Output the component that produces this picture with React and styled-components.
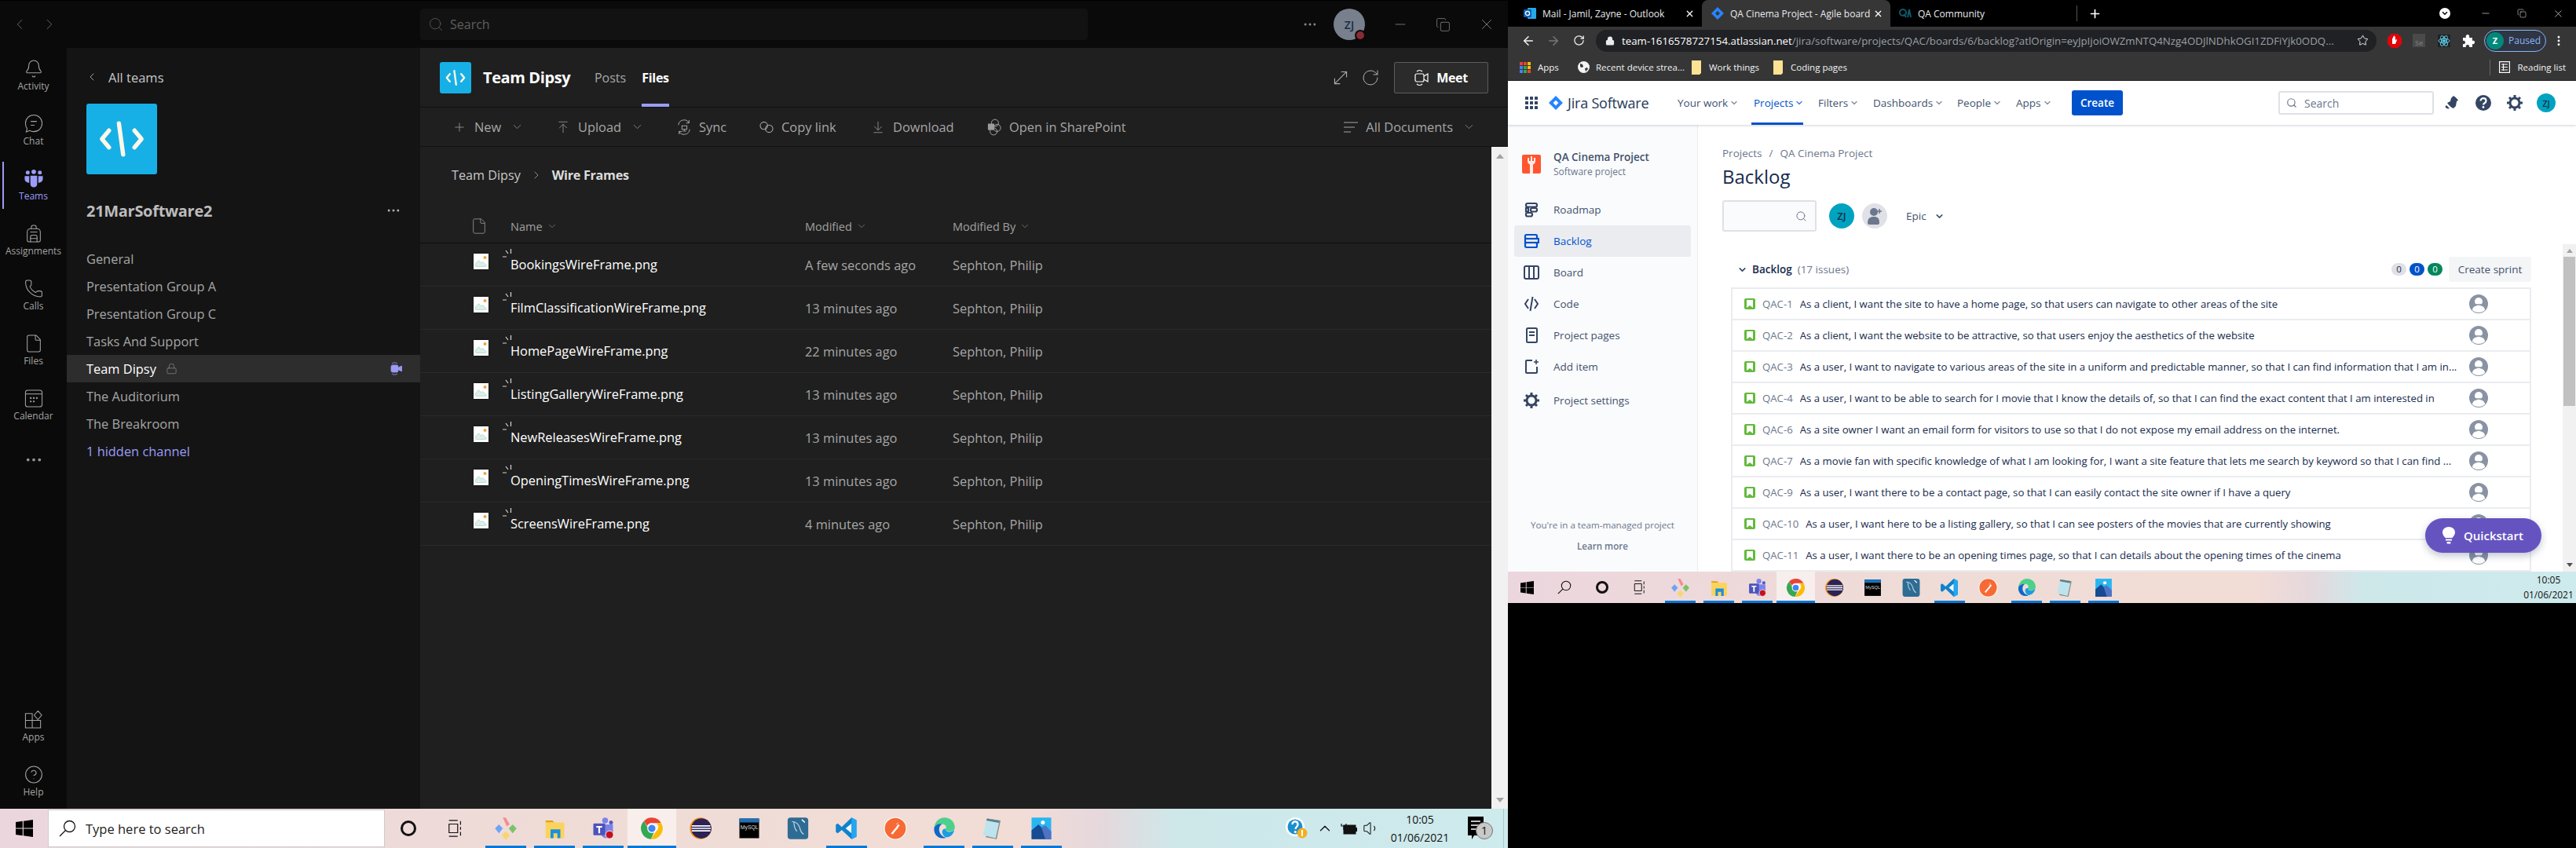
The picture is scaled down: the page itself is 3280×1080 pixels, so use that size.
import React from "react";
import styled, { createGlobalStyle } from "styled-components";
import {
  ArrowDownToLine, ArrowLeft, ArrowRight, ArrowUpToLine, Backpack, Bell, ChevronDown, ChevronLeft, ChevronRight, ChevronUp,
  CircleHelp, Copy, Ellipsis, EllipsisVertical, File, Lock, Minus, MoveDiagonal, Phone, Plus, RotateCw, Search,
  Star, Volume1, X,
} from "lucide-react";

const Global = createGlobalStyle`
  html, body { margin: 0; padding: 0; background: #000; }
  body { font-family: "Open Sans", "Liberation Sans", sans-serif; overflow: hidden; }
  * { box-sizing: border-box; }
`;

const Page = styled.div`
  display: flex;
  width: 3280px;
  height: 1080px;
  background: #000;
  overflow: hidden;
`;

const LeftScreen = styled.div`
  display: flex;
  flex-direction: column;
  width: 1920px;
  height: 1080px;
  flex: none;
`;

const RightScreen = styled.div`
  display: flex;
  flex-direction: column;
  width: 1360px;
  height: 768px;
  flex: none;
`;

/* ---------- Teams window ---------- */

const TeamsWindow = styled.div`
  display: flex;
  flex-direction: column;
  height: 1030px;
  background: #1f1f1f;
`;

const TitleBar = styled.div`
  display: flex;
  align-items: center;
  height: 61px;
  flex: none;
  background: #0a0a0a;
  border-top: 1px solid #000;
  color: #6f6f6f;
`;

const HistoryNav = styled.div`
  display: flex;
  gap: 16px;
  width: 535px;
  padding-left: 14px;
`;

const TitleSearch = styled.div`
  display: flex;
  align-items: center;
  gap: 8px;
  width: 850px;
  height: 40px;
  padding-left: 10px;
  background: #121212;
  border-radius: 4px;
  font-size: 16px;
  color: #5e5e5e;
`;

const TitleDots = styled.div`
  display: flex;
  margin-left: 273px;
  color: #8a8a8a;
`;

const Avatar = styled.div`
  position: relative;
  display: flex;
  align-items: center;
  justify-content: center;
  width: 40px;
  height: 40px;
  margin: 0 17px 0 20px;
  border-radius: 50%;
  background: #77808c;
  color: #1d2a4a;
  font-size: 14px;
  font-weight: 600;
`;

const PresenceDot = styled.span`
  position: absolute;
  right: -1px;
  bottom: -1px;
  width: 14px;
  height: 14px;
  border-radius: 50%;
  border: 2px solid #0a0a0a;
  background: #8a2b33;
`;

const WinBtn = styled.div`
  display: flex;
  align-items: center;
  justify-content: center;
  width: 55px;
  color: #858585;
`;

const TeamsBody = styled.div`
  display: flex;
  flex: 1;
  min-height: 0;
`;

const Rail = styled.nav`
  display: flex;
  flex-direction: column;
  width: 85px;
  flex: none;
  background: #0a0a0a;
`;

const RailItem = styled.div`
  position: relative;
  display: flex;
  flex-direction: column;
  align-items: center;
  gap: 1px;
  height: 70px;
  padding-top: 14px;
  font-size: 12px;
  line-height: 18px;
  color: ${(p) => (p.$active ? "#9a9cf5" : "#a3a3a3")};
  margin-top: ${(p) => (p.$push ? "auto" : "0")};
  svg { height: 25px; width: 26px; }
  ${(p) =>
    p.$active &&
    `&::before { content: ""; position: absolute; left: 3px; top: 5px; width: 2px; height: 60px; background: #9a9cf5; }`}
`;

const RailMore = styled(RailItem)`
  padding-top: 22px;
  color: #9a9a9a;
`;

const ChannelPanel = styled.aside`
  display: flex;
  flex-direction: column;
  width: 450px;
  flex: none;
  background: #141414;
`;

const BackRow = styled.div`
  display: flex;
  align-items: center;
  gap: 13px;
  height: 26px;
  margin-top: 24px;
  padding-left: 24px;
  font-size: 16.5px;
  color: #c8c8c8;
`;

const TeamLogoBox = styled.div`
  display: flex;
  align-items: center;
  justify-content: center;
  width: ${(p) => p.$size}px;
  height: ${(p) => p.$size}px;
  flex: none;
  border-radius: 3px;
  background: #17b0e6;
`;

const LogoSlot = styled.div`
  margin: 21px 0 0 25px;
`;

const TeamName = styled.div`
  display: flex;
  align-items: center;
  justify-content: space-between;
  height: 30px;
  margin-top: 31px;
  padding: 0 24px 0 25px;
  font-size: 20px;
  font-weight: 700;
  letter-spacing: -0.3px;
  color: #bcbcbc;
  svg { color: #b0b0b0; }
`;

const ChannelList = styled.ul`
  list-style: none;
  margin: 29px 0 0;
  padding: 0;
`;

const Channel = styled.li`
  display: flex;
  align-items: center;
  gap: 12px;
  height: 35px;
  padding: 0 23px 0 25px;
  font-size: 16.4px;
  color: ${(p) => (p.$active ? "#fff" : p.$link ? "#9a9cf5" : "#a6a6a6")};
  background: ${(p) => (p.$active ? "#2d2d2d" : "transparent")};
`;

const ChannelSpacer = styled.span`
  flex: 1;
`;

const Content = styled.main`
  display: flex;
  flex-direction: column;
  flex: 1;
  min-width: 0;
`;

const ChannelHeader = styled.header`
  display: flex;
  align-items: stretch;
  height: 76px;
  flex: none;
  padding: 0 25px;
  border-bottom: 1px solid #111;
`;

const HeaderLogo = styled.div`
  display: flex;
  align-items: center;
`;

const HeaderTitle = styled.div`
  display: flex;
  align-items: center;
  width: 142px;
  margin-left: 15px;
  font-size: 20px;
  font-weight: 700;
  letter-spacing: -0.4px;
  color: #fff;
`;

const Tab = styled.div`
  display: flex;
  align-items: center;
  justify-content: center;
  padding-top: 4px;
  width: ${(p) => p.$w}px;
  margin-right: ${(p) => p.$gap || 0}px;
  font-size: 16px;
  font-weight: ${(p) => (p.$active ? 700 : 400)};
  letter-spacing: ${(p) => (p.$active ? "-0.3px" : "0")};
  color: ${(p) => (p.$active ? "#fff" : "#a6a6a6")};
  border-bottom: 4px solid ${(p) => (p.$active ? "#9a9cf5" : "transparent")};
`;

const HeaderRight = styled.div`
  display: flex;
  align-items: center;
  margin-left: auto;
  color: #b0b0b0;
`;

const HeaderIcon = styled.div`
  display: flex;
  justify-content: center;
  width: 38px;
`;

const MeetButton = styled.div`
  display: flex;
  align-items: center;
  justify-content: center;
  gap: 10px;
  width: 120px;
  height: 40px;
  margin-left: 11px;
  border: 1px solid #5c5c5c;
  border-radius: 2px;
  background: #2b2b2b;
  color: #fff;
  font-size: 16px;
  font-weight: 700;
  letter-spacing: -0.3px;
`;

const Toolbar = styled.div`
  display: flex;
  align-items: center;
  height: 50px;
  flex: none;
  padding: 0 41px;
  border-bottom: 1px solid #111;
  color: #a6a6a6;
  font-size: 16.4px;
`;

const Tool = styled.div`
  display: flex;
  align-items: center;
  gap: 10px;
  width: ${(p) => (p.$w ? `${p.$w}px` : "auto")};
  margin-left: ${(p) => (p.$right ? "auto" : "0")};
`;

const ToolIcon = styled.span`
  display: flex;
  justify-content: center;
  width: 18px;
  flex: none;
`;

const ToolChevron = styled.span`
  display: flex;
  margin-left: 2px;
`;

const FilesArea = styled.div`
  display: flex;
  flex: 1;
  min-height: 0;
`;

const FilesMain = styled.div`
  flex: 1;
  min-width: 0;
`;

const Crumbs = styled.div`
  display: flex;
  align-items: center;
  gap: 12px;
  height: 28px;
  margin-top: 22px;
  padding-left: 40px;
  font-size: 16.2px;
  color: #c8c8c8;
`;

const CrumbCurrent = styled.strong`
  font-weight: 700;
  letter-spacing: -0.3px;
  color: #dcdcdc;
`;

const TableGrid = styled.div`
  display: grid;
  grid-template-columns: 115px 375px 188px 1fr;
  align-items: center;
`;

const TableHead = styled(TableGrid)`
  height: 43px;
  margin-top: 30px;
  border-bottom: 1px solid #0e0e0e;
  font-size: 14.5px;
  color: #a0a0a0;
`;

const HeadCell = styled.div`
  display: flex;
  align-items: center;
  gap: 5px;
`;

const FileHeadIcon = styled.div`
  display: flex;
  padding-left: 64px;
  color: #8c8c8c;
`;

const FileRow = styled(TableGrid)`
  height: 55px;
  border-bottom: 1px solid #2a2a2a;
  font-size: 16.4px;
  color: #a6a6a6;
`;

const ThumbCell = styled.div`
  display: flex;
  padding: 0 0 8px 68px;
`;

const Thumb = styled.div`
  display: flex;
  width: 19px;
  height: 20px;
  background: #fff;
  box-shadow: 0 0 2px rgba(0, 0, 0, 0.7);
`;

const FileName = styled.div`
  position: relative;
  line-height: 22px;
  color: #fff;
`;

const SyncMarks = styled.svg`
  position: absolute;
  left: -10px;
  top: -9px;
`;

const ScrollTrack = styled.div`
  display: flex;
  flex-direction: column;
  justify-content: space-between;
  align-items: center;
  width: 21px;
  flex: none;
  padding: 9px 0 8px;
  background: #f1f1f1;
`;

const Triangle = styled.span`
  width: 0;
  height: 0;
  border-left: 5px solid transparent;
  border-right: 5px solid transparent;
  ${(p) => (p.$down ? "border-top: 6px solid #a3a3a3;" : "border-bottom: 6px solid #a3a3a3;")}
`;

/* ---------- Windows taskbar ---------- */

const Taskbar = styled.footer`
  display: flex;
  align-items: center;
  height: ${(p) => p.$h}px;
  flex: none;
  background: linear-gradient(90deg, #ecd6de 0%, #efdcd6 40%, #f2dcd6 ${(p) => p.$stop}%, #e5d8dc ${(p) => p.$stop + 5}%, #cee8ea ${(p) => p.$stop + 10}%, #cdeaec 100%);
  color: #111;
`;

const BarCell = styled.div`
  position: relative;
  display: flex;
  align-items: center;
  justify-content: center;
  width: ${(p) => p.$w}px;
  height: 100%;
  flex: none;
  background: ${(p) => (p.$active ? "rgba(255,255,255,0.55)" : "transparent")};
  ${(p) =>
    p.$open &&
    `&::after { content: ""; position: absolute; left: ${p.$active ? 0 : 5}px; right: ${p.$active ? 0 : 5}px; bottom: 0; height: 3px; background: #0078d7; }`}
`;

const TaskSearch = styled.div`
  display: flex;
  align-items: center;
  gap: 12px;
  width: 429px;
  height: 48px;
  padding-left: 13px;
  background: #fff;
  border: 1px solid #ccc;
  font-size: 16.5px;
  color: #222;
`;

const Tray = styled.div`
  display: flex;
  align-items: center;
  margin-left: auto;
  height: 100%;
`;

const TraySlot = styled.div`
  display: flex;
  justify-content: center;
  width: ${(p) => p.$w}px;
`;

const Clock = styled.div`
  display: flex;
  flex-direction: column;
  align-items: center;
  justify-content: center;
  gap: ${(p) => p.$gap}px;
  width: ${(p) => p.$w}px;
  font-size: ${(p) => p.$size}px;
  margin-left: ${(p) => (p.$push ? "auto" : "0")};
  margin-right: ${(p) => p.$end || 0}px;
  line-height: 15px;
  color: #111;
`;

const NotifyBox = styled.div`
  position: relative;
  display: flex;
  justify-content: center;
  width: 46px;
`;

const NotifyBadge = styled.span`
  position: absolute;
  left: 23px;
  top: 7px;
  width: 22px;
  height: 22px;
  line-height: 20px;
  border-radius: 50%;
  border: 1px solid #777;
  background: #c9c9c9;
  font-size: 14px;
  text-align: center;
  color: #111;
`;

const ShowDesktop = styled.span`
  width: 6px;
  height: 100%;
  margin-left: 12px;
  border-left: 1px solid #a9c8cc;
`;

/* ---------- Chrome ---------- */

const Browser = styled.div`
  display: flex;
  flex-direction: column;
  height: 728px;
  flex: none;
  background: #fff;
`;

const TabStrip = styled.div`
  display: flex;
  align-items: center;
  height: 34px;
  flex: none;
  background: #000;
  font-size: 12px;
  color: #e8eaed;
`;

const ChromeTab = styled.div`
  display: flex;
  align-items: center;
  gap: 8px;
  width: ${(p) => p.$w}px;
  height: 100%;
  padding-left: ${(p) => p.$pad}px;
  flex: none;
  background: ${(p) => (p.$active ? "#363636" : "transparent")};
  border-radius: ${(p) => (p.$active ? "8px 8px 0 0" : "0")};
`;

const TabTitle = styled.span`
  flex: 1;
  min-width: 0;
  white-space: nowrap;
`;

const TabClose = styled.span`
  display: flex;
  width: 22px;
  flex: none;
  color: #fff;
`;

const TabDivider = styled.span`
  width: 1px;
  height: 20px;
  margin-left: -1px;
  background: #555;
`;

const NewTab = styled.span`
  display: flex;
  margin-left: 14px;
  color: #fff;
`;

const ChromeControls = styled.div`
  display: flex;
  align-items: center;
  margin-left: auto;
  color: #fff;
`;

const ChromeCtl = styled.span`
  display: flex;
  justify-content: center;
  width: 46px;
`;

const MenuDisc = styled.span`
  display: flex;
  align-items: center;
  justify-content: center;
  width: 14px;
  height: 14px;
  margin-right: 22px;
  border-radius: 50%;
  background: #fff;
`;

const ToolRow = styled.div`
  display: flex;
  align-items: center;
  height: 35px;
  flex: none;
  padding-left: 10px;
  background: #363636;
  color: #fff;
`;

const NavBtn = styled.span`
  display: flex;
  justify-content: center;
  width: 32px;
  color: ${(p) => (p.$dim ? "#777" : "#f1f3f4")};
`;

const Omnibox = styled.div`
  display: flex;
  align-items: center;
  width: 994px;
  height: 28px;
  margin-left: 6px;
  padding: 0 10px 0 12px;
  border-radius: 14px;
  background: #202124;
  font-size: 13.3px;
  overflow: hidden;
  white-space: nowrap;
`;

const UrlHost = styled.span`
  margin-left: 9px;
  color: #fff;
`;

const UrlPath = styled.span`
  flex: 1;
  min-width: 0;
  overflow: hidden;
  color: #9aa0a6;
`;

const ExtSlot = styled.span`
  display: flex;
  justify-content: center;
  width: 31.5px;
`;

const ExtRow = styled.div`
  display: flex;
  align-items: center;
  margin-left: 7px;
`;

const ProfilePill = styled.div`
  display: flex;
  align-items: center;
  gap: 6px;
  width: 79px;
  height: 28px;
  margin-left: 4px;
  padding-left: 2px;
  border: 1px solid #8ab4f8;
  border-radius: 14px;
  background: #2f3542;
  font-size: 12px;
  color: #8ab4f8;
`;

const ProfileDisc = styled.span`
  display: flex;
  align-items: center;
  justify-content: center;
  width: 22px;
  height: 22px;
  border-radius: 50%;
  background: #00897b;
  font-size: 11px;
  font-weight: 700;
  color: #fff;
`;

const Bookmarks = styled.div`
  display: flex;
  align-items: center;
  height: 34px;
  flex: none;
  padding-left: 15px;
  background: #363636;
  border-bottom: 1px solid #222;
  font-size: 11.5px;
  color: #f1f3f4;
`;

const Bookmark = styled.div`
  display: flex;
  align-items: center;
  gap: ${(p) => p.$gap}px;
  width: ${(p) => p.$w}px;
  flex: none;
  white-space: nowrap;
`;

const ReadingList = styled.div`
  display: flex;
  align-items: center;
  gap: 9px;
  margin-left: auto;
  padding: 0 13px 0 11px;
  border-left: 1px solid #666;
  height: 20px;
`;

/* ---------- Jira ---------- */

const JiraNav = styled.div`
  position: relative;
  z-index: 2;
  display: flex;
  align-items: center;
  height: 56px;
  flex: none;
  padding-left: 22px;
  background: #fff;
  box-shadow: 0 1px 3px rgba(9, 30, 66, 0.2);
  color: #42526e;
  font-size: 13.5px;
`;

const JiraBrand = styled.div`
  display: flex;
  align-items: center;
  gap: 6px;
  width: 164px;
  margin-left: 14px;
  font-size: 18px;
  letter-spacing: -0.2px;
  color: #253858;
`;

const MenuItem = styled.div`
  position: relative;
  display: flex;
  align-items: center;
  gap: 2px;
  width: ${(p) => p.$w}px;
  height: 100%;
  flex: none;
  font-weight: 500;
  color: ${(p) => (p.$active ? "#0052cc" : "#42526e")};
  svg { color: ${(p) => (p.$active ? "#4c84d9" : "#8993a4")}; }
  ${(p) =>
    p.$active &&
    `&::after { content: ""; position: absolute; left: -3px; width: 66px; bottom: 0; height: 3px; background: #0052cc; }`}
`;

const CreateButton = styled.div`
  display: flex;
  align-items: center;
  justify-content: center;
  width: 65px;
  height: 32px;
  border-radius: 3px;
  background: #0052cc;
  color: #fff;
  font-size: 13.5px;
  font-weight: 600;
`;

const JiraSearch = styled.div`
  display: flex;
  align-items: center;
  gap: 9px;
  width: 198px;
  height: 30px;
  margin-left: 198px;
  padding-left: 8px;
  border: 2px solid #dfe1e6;
  border-radius: 3px;
  font-size: 14px;
  color: #6b778c;
`;

const JiraActions = styled.div`
  display: flex;
  align-items: center;
  gap: 16px;
  margin-left: 11px;
  color: #344563;
`;

const JiraAction = styled.span`
  display: flex;
  width: 24px;
  height: 24px;
  align-items: center;
  justify-content: center;
`;

const RoundAvatar = styled.div`
  display: flex;
  align-items: center;
  justify-content: center;
  width: ${(p) => p.$size}px;
  height: ${(p) => p.$size}px;
  flex: none;
  margin-left: ${(p) => p.$gap || 0}px;
  border-radius: 50%;
  background: ${(p) => p.$bg || "#00a3bf"};
  color: #172b4d;
  font-size: ${(p) => p.$font || 11}px;
  font-weight: 600;
`;

const JiraBody = styled.div`
  position: relative;
  display: flex;
  flex: 1;
  min-height: 0;
`;

const Sidebar = styled.aside`
  display: flex;
  flex-direction: column;
  width: 242px;
  flex: none;
  padding-top: 31px;
  background: #fafbfc;
  border-right: 1px solid #ebecf0;
`;

const ProjectHead = styled.div`
  display: flex;
  align-items: center;
  gap: 16px;
  height: 38px;
  padding-left: 18px;
`;

const ProjectName = styled.div`
  font-size: 13.5px;
  line-height: 20px;
  font-weight: 600;
  color: #42526e;
`;

const ProjectKind = styled.div`
  font-size: 12px;
  line-height: 18px;
  color: #6b778c;
`;

const SideNav = styled.ul`
  list-style: none;
  margin: 19px 8px 0 8px;
  padding: 0;
`;

const SideItem = styled.li`
  display: flex;
  align-items: center;
  gap: 18px;
  height: 40px;
  margin-top: ${(p) => p.$gap || 0}px;
  padding-left: 12px;
  border-radius: 3px;
  font-size: 13.5px;
  color: ${(p) => (p.$active ? "#0052cc" : "#42526e")};
  background: ${(p) => (p.$active ? "#ebecf0" : "transparent")};
`;

const SideFoot = styled.div`
  display: flex;
  flex-direction: column;
  align-items: center;
  gap: 9px;
  margin-top: auto;
  padding-bottom: 23px;
  font-size: 11.6px;
  line-height: 18px;
  color: #6b778c;
`;

const LearnMore = styled.span`
  font-weight: 600;
`;

const BacklogMain = styled.div`
  flex: 1;
  min-width: 0;
  padding: 26px 40px 0 31px;
  overflow: hidden;
`;

const JiraCrumbs = styled.div`
  display: flex;
  gap: 9px;
  line-height: 20px;
  font-size: 13.5px;
  color: #6b778c;
`;

const PageTitle = styled.h1`
  margin: 4px 0 0;
  line-height: 32px;
  font-size: 24px;
  font-weight: 500;
  color: #172b4d;
`;

const FilterRow = styled.div`
  display: flex;
  align-items: center;
  margin-top: 14px;
  height: 40px;
`;

const FilterBox = styled.div`
  display: flex;
  align-items: center;
  justify-content: flex-end;
  width: 120px;
  height: 40px;
  margin-right: 16px;
  padding-right: 10px;
  background: #fafbfc;
  border: 2px solid #dfe1e6;
  border-radius: 3px;
  color: #6b778c;
`;

const EpicPicker = styled.div`
  display: flex;
  align-items: center;
  gap: 10px;
  margin-left: 24px;
  font-size: 13.5px;
  color: #42526e;
`;

const BacklogHead = styled.div`
  display: flex;
  align-items: center;
  height: 32px;
  margin: 32px 0 0 11px;
  padding-left: 8px;
  font-size: 13.5px;
  color: #172b4d;
`;

const BacklogTitle = styled.strong`
  margin-left: 6px;
  font-weight: 600;
`;

const IssueCount = styled.span`
  margin-left: 7px;
  color: #6b778c;
`;

const Badges = styled.div`
  display: flex;
  gap: 4px;
  margin-left: auto;
`;

const Badge = styled.span`
  width: 19px;
  height: 16px;
  line-height: 16px;
  border-radius: 8px;
  text-align: center;
  font-size: 11.5px;
  background: ${(p) => p.$bg};
  color: ${(p) => p.$fg};
`;

const SprintButton = styled.div`
  display: flex;
  align-items: center;
  justify-content: center;
  width: 105px;
  height: 32px;
  margin-left: 8px;
  border-radius: 3px;
  background: #f4f5f7;
  font-size: 13.5px;
  color: #42526e;
`;

const IssueList = styled.ul`
  list-style: none;
  margin: 7px 0 0 11px;
  padding: 0;
  border: 2px solid #ebecf0;
  border-bottom: none;
`;

const IssueRow = styled.li`
  display: flex;
  align-items: center;
  height: 40px;
  padding: 0 53px 0 15px;
  border-bottom: 2px solid #ebecf0;
  font-size: 13.2px;
  white-space: nowrap;
`;

const IssueType = styled.span`
  display: flex;
  align-items: center;
  justify-content: center;
  width: 14px;
  height: 14px;
  flex: none;
  border-radius: 2px;
  background: #63ba3c;
`;

const IssueKey = styled.span`
  margin: 0 9px;
  flex: none;
  color: #6b778c;
`;

const IssueSummary = styled.span`
  flex: 1;
  min-width: 0;
  color: #172b4d;
  overflow: hidden;
`;

const PageScroll = styled.div`
  display: flex;
  flex-direction: column;
  align-items: center;
  width: 17px;
  flex: none;
  margin-top: 152px;
  background: #f1f1f1;
`;

const ScrollThumb = styled.div`
  width: 15px;
  height: 190px;
  margin: 5px 0 auto;
  background: #c1c1c1;
`;

const PageArrow = styled.span`
  width: 0;
  height: 0;
  margin: ${(p) => (p.$down ? "0 0 6px" : "6px 0 0")};
  border-left: 4px solid transparent;
  border-right: 4px solid transparent;
  ${(p) => (p.$down ? "border-top: 5px solid #505050;" : "border-bottom: 5px solid #a3a3a3;")}
`;

const Quickstart = styled.div`
  position: absolute;
  right: 44px;
  bottom: 24px;
  display: flex;
  align-items: center;
  gap: 11px;
  width: 148px;
  height: 44px;
  padding-left: 22px;
  border-radius: 22px;
  background: #6554c0;
  box-shadow: 0 4px 10px rgba(9, 30, 66, 0.25);
  color: #fff;
  font-size: 15px;
  font-weight: 600;
`;

/* ---------- drawings ---------- */

const CodeMark = ({ size }) => (
  <svg width={size} height={size} viewBox="0 0 40 40" fill="none" stroke="#fdf8e8" strokeWidth="3" strokeLinecap="round" strokeLinejoin="round">
    <path d="M11 14l-5 6 5 6M29 14l5 6-5 6M18 9l3 22" />
  </svg>
);

const ChatIcon = () => (
  <svg viewBox="0 0 26 26" fill="none" stroke="currentColor" strokeWidth="1.1">
    <path d="M13 1.500c6.200 0 11 4.900 11 11s-4.800 11-11 11c-2 0-4-.5-5.600-1.400L3 24l1.200-4.400C2.800 17.800 2 15.300 2 12.500c0-6.100 4.800-11 11-11z" />
    <path d="M9 10h8M9 15h5" />
  </svg>
);

const TeamsIcon = () => (
  <svg viewBox="0 0 26 26" fill="#9a9cf5">
    <circle cx="5" cy="5" r="2.600" />
    <circle cx="13" cy="4" r="3" />
    <circle cx="21" cy="5" r="2.600" />
    <path d="M1 9.500h6v9c-3 0-6-2-6-5zM8.500 9h9v11c0 6-9 6-9 0zM19 9.500h6v4c0 3-3 5-6 5z" />
  </svg>
);

const CalendarIcon = () => (
  <svg viewBox="0 0 26 26" fill="none" stroke="currentColor" strokeWidth="1.1">
    <rect x="2" y="2" width="22" height="22" rx="3" />
    <path d="M2 7h22" />
    <g fill="currentColor" stroke="none">
      <circle cx="9" cy="12.500" r="1.200" />
      <circle cx="13" cy="12.500" r="1.200" />
      <circle cx="17" cy="12.500" r="1.200" />
      <circle cx="9" cy="17" r="1.200" />
      <circle cx="13" cy="17" r="1.200" />
    </g>
  </svg>
);

const AppsIcon = () => (
  <svg viewBox="0 0 26 26" fill="none" stroke="currentColor" strokeWidth="1.1">
    <path d="M2 5h9v9H2zM2 14h9v10H2zM11 14h11v10H11zM18.500 1.500l5 5.500-5 6-5-6z" />
  </svg>
);

const Thumbnail = () => (
  <svg width="19" height="20" viewBox="0 0 19 20" fill="none">
    <circle cx="14.500" cy="5" r="2" fill="#f2a23b" />
    <path d="M2 15c1-3 3-6 5-6l2.500 3 2-1.500 5 4.500c-.3 1-1 1.500-2 1.500H4c-1 0-2-.5-2-1.500z" fill="#dcefe8" stroke="#a8cfc0" strokeWidth=".7" />
  </svg>
);

const SyncIcon = () => (
  <svg width="20" height="22" viewBox="0 0 20 22" fill="none" stroke="currentColor" strokeWidth="1.1">
    <path d="M2 8a8 8 0 0 1 15-3M18 14a8 8 0 0 1-15 3M17 1v4h-4M3 21v-4h4" />
    <rect x="7" y="9" width="7" height="5" />
    <path d="M10.500 14v2M8 16.500h5" />
  </svg>
);

const LinkIcon = () => (
  <svg width="19" height="16" viewBox="0 0 19 16" fill="none" stroke="currentColor" strokeWidth="1.1">
    <circle cx="6" cy="6" r="5" />
    <circle cx="13" cy="10" r="5" />
  </svg>
);

const SharePointIcon = () => (
  <svg width="20" height="24" viewBox="0 0 20 24" fill="none" stroke="currentColor" strokeWidth="1.1">
    <circle cx="11" cy="6" r="5" />
    <circle cx="14" cy="13" r="5" />
    <circle cx="9" cy="18" r="5" />
    <rect x="1" y="7" width="9" height="9" fill="#9c9c9c" stroke="none" />
  </svg>
);

const ListLines = () => (
  <svg width="18" height="16" viewBox="0 0 18 16" stroke="currentColor" strokeWidth="1.200">
    <path d="M0 2h18M0 8h14M0 14h9" />
  </svg>
);

const MeetIcon = ({ color = "currentColor" }) => (
  <svg width="18" height="22" viewBox="0 0 18 22" fill="none" stroke={color} strokeWidth="1.200">
    <rect x="1" y="6" width="11" height="10" rx="2" />
    <path d="M12 9l5-3v10l-5-3M3 3c2-2 5-2 7 0M3 19c2 2 5 2 7 0" />
  </svg>
);

const PurpleVideo = () => (
  <svg width="15" height="17" viewBox="0 0 15 17" fill="#9a9cf5" stroke="#9a9cf5" strokeWidth=".8">
    <rect x="1" y="4" width="9" height="9" rx="2" />
    <path d="M10.500 7l4-2v7l-4-2z" />
    <path d="M2 2c2-1.500 5-1.500 7 0M2 15c2 1.500 5 1.500 7 0" fill="none" />
  </svg>
);

const WinLogo = ({ size }) => (
  <svg width={size} height={size} viewBox="0 0 20 20" fill="#000">
    <path d="M0 2.800l8-1.100v7.900H0zM9 1.500L20 0v9.600H9zM0 10.400h8v7.900l-8-1.100zM9 10.400h11V20L9 18.500z" />
  </svg>
);

const TaskMagnifier = ({ size }) => (
  <svg width={size} height={size} viewBox="0 0 22 22" fill="none" stroke="#111" strokeWidth="1.300">
    <circle cx="13.500" cy="8.500" r="7" />
    <path d="M8.500 13.500L1 21" />
  </svg>
);

const CortanaRing = styled.span`
  width: ${(p) => p.$size}px;
  height: ${(p) => p.$size}px;
  border-radius: 50%;
  border: ${(p) => Math.round(p.$size / 6)}px solid #111;
`;

const TaskViewIcon = ({ size }) => (
  <svg width={size} height={size} viewBox="0 0 20 24" fill="none" stroke="#111" strokeWidth="1.300">
    <path d="M1 1h12M1 23h12M1 6h12v12H1zM17 2v5M17 10v4M17 17v5" />
  </svg>
);

const AppIcon = ({ name, size }) => {
  const art = {
    kraken: (
      <g>
        <path d="M5 8l4 4-4 5-4-5z" fill="#6ea4f4" />
        <path d="M12 15l4 4-4 5-4-5z" fill="#f5d76e" />
        <path d="M19 8l4 4-4 5-4-5z" fill="#7ac36a" />
        <path d="M9 1l3 0 4 7-3 2z" fill="#f08f8f" />
      </g>
    ),
    folder: (
      <g>
        <path d="M3 4h7l2 2h-9z" fill="#e5a100" />
        <path d="M3 6h19v16H3z" fill="#fbd35b" />
        <path d="M8 13h10v9h-3v-5h-4v5H8z" fill="#1c8fdb" />
      </g>
    ),
    teams: (
      <g>
        <circle cx="14" cy="4" r="3" fill="#7b83eb" />
        <circle cx="20" cy="6" r="2" fill="#5059c9" />
        <path d="M10 8h12v9c0 3-2 5-6 5s-6-2-6-5z" fill="#7b83eb" />
        <rect x="2" y="7" width="12" height="12" rx="1" fill="#4b53bc" />
        <path d="M5 9.500h6v1.600H8.900V17H7.100v-5.900H5z" fill="#fff" />
        <circle cx="18.500" cy="18.500" r="4" fill="#c50f1f" stroke="#eee" strokeWidth=".8" />
      </g>
    ),
    chrome: (
      <g>
        <path d="M12 1a11 11 0 0 1 9.500 5.500H12a5.500 5.500 0 0 0-4.800 2.800L3.900 4.500A11 11 0 0 1 12 1z" fill="#ea4335" />
        <path d="M3.900 4.500l4.800 8.300a5.500 5.500 0 0 0 5.800 2.600L11 23A11 11 0 0 1 3.900 4.500z" fill="#34a853" />
        <path d="M21.500 6.500A11 11 0 0 1 11 23l5.200-7.800A5.500 5.500 0 0 0 16.800 6.500z" fill="#fbbc04" />
        <circle cx="12" cy="12" r="4.700" fill="#fff" />
        <circle cx="12" cy="12" r="3.700" fill="#4285f4" />
      </g>
    ),
    eclipse: (
      <g>
        <circle cx="12" cy="12" r="11" fill="#f7941e" />
        <circle cx="12.800" cy="12" r="10.300" fill="#2c2255" />
        <path d="M3 9.500h19M2.800 12h19.600M3 14.500h19" stroke="#fff" strokeWidth="1.300" />
      </g>
    ),
    mysqlsh: (
      <g>
        <rect x="2" y="2" width="20" height="20" fill="#000" />
        <rect x="2" y="2" width="20" height="4" fill="#1c72b8" />
        <text x="3" y="13" fontSize="5.500" fill="#ddd" fontFamily="Liberation Sans">MySQL</text>
      </g>
    ),
    workbench: (
      <g>
        <rect x="1.500" y="1" width="21" height="22" rx="3" fill="#2e6c93" />
        <path d="M6 5c4 0 7 3 8 7s2 5 4 6M8 6c0 4 1 7 3 9" fill="none" stroke="#b9d4e4" strokeWidth="1" />
        <path d="M16 3l3 3" stroke="#fff" strokeWidth="1.200" />
      </g>
    ),
    vscode: (
      <g>
        <path d="M17 1l5 2.500v17L17 23 7 13.500 3 17l-2-1.200V8.200L3 7l4 3.500z" fill="#0f82cc" />
        <path d="M17 7v10l-6-5z" fill="#fff" fillOpacity="0.95" />
        <path d="M17 1l5 2.500v17L17 23z" fill="#23a7f1" />
      </g>
    ),
    postman: (
      <g>
        <circle cx="12" cy="12" r="11.500" fill="#fff" />
        <circle cx="12" cy="12" r="10.700" fill="#f76935" />
        <path d="M8 17l5-6 2-3 1 1-2 3-5 6z M13 8l2-2" fill="#fff" stroke="#fff" strokeWidth=".6" />
      </g>
    ),
    edge: (
      <g>
        <path d="M2 11C3 5 7 1 12.500 1 18 1 23 5 23 11c0 3-3 4.500-6 4-2 0-3.500-1-3.500-2.500 2-3-1-5-3.500-5S4 8 2 11z" fill="#4cd08c" />
        <path d="M2 11c2-3 5-4 8-3.500-2 1-3 3-3 5.500 0 4 3 7.500 7 8.500-1 .5-2 .5-3 .5C6 22.500 1 18 2 11z" fill="#0f68c4" />
        <path d="M13.500 12.500c0 2 2 3 4 3 2 0 3.500-1 5-2-1 5-5 8-9 7.500-2.500-1.500-4-4.500-3-7 .5-1 1.500-2 3-1.500z" fill="#1b9de2" />
      </g>
    ),
    notepad: (
      <g>
        <path d="M7 2l13 2-4 19-11-2z" fill="#8a8a7d" />
        <path d="M6 2l13 2-4 18-13-3z" fill="#bde4ee" />
        <path d="M6 2l13 2-.5 2.500-13-2.500z" fill="#607d8b" />
      </g>
    ),
    photos: (
      <g>
        <rect x="2" y="1" width="20" height="22" fill="#29b6f0" />
        <circle cx="13.500" cy="6" r="2" fill="#fff" />
        <path d="M2 23v-9l7-6 7 7 6 8z" fill="#164a92" />
        <path d="M12 11l4-2 6 6v8h-6z" fill="#4e73c4" />
      </g>
    ),
  };
  return (
    <svg width={size} height={size} viewBox="0 0 24 24">
      {art[name]}
    </svg>
  );
};

const TrayHelp = () => (
  <svg width="28" height="30" viewBox="0 0 28 30">
    <circle cx="12" cy="13" r="12" fill="#fff" />
    <circle cx="12" cy="13" r="9.500" fill="#1a8fd1" />
    <path d="M8.500 10c0-5 7-5 7 0 0 3-3 3-3 6" fill="none" stroke="#fff" strokeWidth="2.400" />
    <circle cx="12.300" cy="19.500" r="1.500" fill="#fff" />
    <circle cx="21" cy="21" r="6.500" fill="#f5ae1d" />
    <rect x="20" y="17" width="2" height="8" fill="#fff" />
  </svg>
);

const TrayPower = () => (
  <svg width="22" height="20" viewBox="0 0 22 20">
    <path d="M1 4v3h6V4M4 7v5" fill="none" stroke="#111" strokeWidth="1.200" />
    <rect x="4" y="6" width="15" height="11" fill="#111" stroke="#111" />
    <rect x="19" y="9" width="2" height="5" fill="#111" />
  </svg>
);

const NotifyIcon = () => (
  <svg width="20" height="30" viewBox="0 0 20 30">
    <path d="M0 0h20v24H8l-3 5v-5H0z" fill="#000" />
    <path d="M4 6h12M4 11h12M4 16h12" stroke="#fff" strokeWidth="1.500" />
  </svg>
);

const OutlookIcon = () => (
  <svg width="16" height="16" viewBox="0 0 16 16">
    <rect x="5" y="1" width="11" height="14" rx="1" fill="#28a8ea" />
    <rect x="0" y="3" width="10" height="10" rx="1" fill="#0a5fb4" />
    <circle cx="5" cy="8" r="2.600" fill="none" stroke="#fff" strokeWidth="1.300" />
  </svg>
);

const JiraDiamond = ({ size, color = "#2684ff" }) => (
  <svg width={size} height={size} viewBox="0 0 16 16">
    <path d="M8 0l8 8-8 8-8-8zM8 5L5 8l3 3 3-3z" fill={color} fillRule="evenodd" />
  </svg>
);

const Favicon = styled.span`
  display: flex;
  flex: none;
`;

const QaMark = () => (
  <svg width="16" height="14" viewBox="0 0 16 14" fill="none" stroke="#0e5a6b" strokeWidth="2">
    <circle cx="5" cy="6" r="4" />
    <path d="M6 8l3 4M11 12l2-10 2 10" />
  </svg>
);

const AppsGrid = () => (
  <svg width="14" height="14" viewBox="0 0 14 14">
    {["#ea4335", "#ea4335", "#fbbc04", "#4285f4", "#34a853", "#fbbc04", "#4285f4", "#34a853", "#ea4335"].map((c, i) => (
      <rect key={i} x={(i % 3) * 5} y={Math.floor(i / 3) * 5} width="4" height="4" fill={c} />
    ))}
  </svg>
);

const Globe = () => (
  <svg width="15" height="15" viewBox="0 0 15 15">
    <circle cx="7.500" cy="7.500" r="7.500" fill="#f1f3f4" />
    <path d="M3 3l3 1 1 3-2 1-2-1zM9 9l3-1 1 2-3 3z" fill="#363636" />
  </svg>
);

const FolderMark = () => (
  <svg width="12" height="18" viewBox="0 0 12 18">
    <path d="M0 0h12v16l-2 2H0z" fill="#fde293" />
  </svg>
);

const Shield = () => (
  <svg width="18" height="18" viewBox="0 0 18 18">
    <path d="M5 0h8l5 5v8l-5 5H5l-5-5V5z" fill="#e0040b" />
    <path d="M6 13V6c1-1 1 0 1 1V4c1-1 1 0 1 0v3-4c1-1 1 0 1 0v4-3c1-1 1 0 1 0v5l1-2c1 0 1 1 1 1l-2 5z" fill="#fff" />
  </svg>
);

const SeMark = styled.span`
  display: flex;
  align-items: flex-end;
  justify-content: center;
  width: 16px;
  height: 17px;
  background: #4a4a4a;
  font-size: 9px;
  line-height: 11px;
  font-weight: 700;
  color: #6f6f6f;
`;

const ReactMark = () => (
  <svg width="16" height="16" viewBox="0 0 16 16" fill="none" stroke="#61dafb" strokeWidth=".9">
    <rect width="16" height="16" fill="#222" stroke="none" />
    <ellipse cx="8" cy="8" rx="7" ry="2.800" />
    <ellipse cx="8" cy="8" rx="7" ry="2.800" transform="rotate(60 8 8)" />
    <ellipse cx="8" cy="8" rx="7" ry="2.800" transform="rotate(120 8 8)" />
    <circle cx="8" cy="8" r="1.300" fill="#61dafb" />
  </svg>
);

const Puzzle = () => (
  <svg width="16" height="16" viewBox="0 0 16 16" fill="#fff">
    <path d="M1 4h4c-1-3 1-4 2-4s3 1 2 4h4v4c3-1 3 1 3 2s-1 3-3 2v4H9c1-2-1-3-2-3s-3 1-2 3H1v-4c2 1 3-1 3-2S3 7 1 8z" />
  </svg>
);

const ReadingIcon = () => (
  <svg width="14" height="15" viewBox="0 0 14 15" fill="none" stroke="#fff" strokeWidth="1.200">
    <rect x=".6" y=".6" width="12.800" height="13.800" />
    <path d="M3 4h8M3 7.500h8M3 11h8M5.500 3v9" />
  </svg>
);

const JiraGrid = () => (
  <svg width="16" height="16" viewBox="0 0 16 16" fill="#344563">
    {[0, 1, 2, 3, 4, 5, 6, 7, 8].map((i) => (
      <rect key={i} x={(i % 3) * 6} y={Math.floor(i / 3) * 6} width="4" height="4" rx=".5" />
    ))}
  </svg>
);

const JiraBell = () => (
  <svg width="20" height="20" viewBox="0 0 20 20" fill="#344563">
    <path d="M12 1c3 2 5 4 6 6l-2 1-1 6-3 3c-3-1-6-4-8-7l4-2 1-4zM3 13l4 4c-2 1-4 0-5-1s0-2 1-3z" />
  </svg>
);

const JiraHelp = () => (
  <svg width="20" height="20" viewBox="0 0 20 20">
    <circle cx="10" cy="10" r="10" fill="#344563" />
    <path d="M6.500 7.500c0-4.500 7-4.500 7 0 0 3-3.500 2.500-3.500 5" fill="none" stroke="#fff" strokeWidth="2.200" />
    <circle cx="10" cy="15.500" r="1.400" fill="#fff" />
  </svg>
);

const Gear = ({ size = 20, color = "#344563" }) => (
  <svg width={size} height={size} viewBox="0 0 20 20" fill="none">
    <circle cx="10" cy="10" r="6" stroke={color} strokeWidth="3" />
    <path d="M10 0v4M10 16v4M0 10h3M17 10h3M3 3l2.500 2.500M14.500 14.500L17 17M3 17l2.500-2.500M14.500 5.500L17 3" stroke={color} strokeWidth="3" />
  </svg>
);

const ProjectLogo = () => (
  <svg width="24" height="24" viewBox="0 0 24 24">
    <rect width="24" height="24" rx="2" fill="#ff5630" />
    <path d="M7 4v4c0 3 2 4 3 4.500V24h4V12.500c1-.5 3-1.500 3-4.500V4l-2 0v4h-2V2h-2v6H9V4z" fill="#ffebe6" />
  </svg>
);

const SideGlyph = ({ name, color = "#42526e" }) => {
  const art = {
    roadmap: (
      <g fill="none" stroke={color} strokeWidth="2.200">
        <rect x="3" y="2" width="14" height="4.500" rx="2" />
        <rect x="9" y="8" width="8" height="4.500" rx="2" />
        <rect x="3" y="14" width="8" height="4.500" rx="2" />
        <path d="M3 8h3v4.500H3z" />
      </g>
    ),
    backlog: (
      <g fill="none" stroke={color} strokeWidth="2.200">
        <rect x="2" y="2" width="15" height="5" rx="1.500" />
        <rect x="2" y="7" width="17" height="5" />
        <rect x="2" y="12" width="15" height="6" rx="1.500" />
      </g>
    ),
    board: (
      <g fill="none" stroke={color} strokeWidth="2">
        <rect x="1" y="2" width="18" height="16" rx="2" />
        <path d="M7 2v16M13 2v16" />
      </g>
    ),
    code: <path d="M6 4L2 10l4 6M14 4l4 6-4 6M11.500 1L8.500 19" fill="none" stroke={color} strokeWidth="2" />,
    pages: (
      <g fill="none" stroke={color} strokeWidth="2">
        <rect x="4" y="1" width="13" height="18" rx="1.500" />
        <path d="M7 6h7M7 10h7" />
      </g>
    ),
    add: (
      <g fill="none" stroke={color} strokeWidth="2">
        <path d="M11 2H4a1 1 0 0 0-1 1v14a1 1 0 0 0 1 1h12a1 1 0 0 0 1-1v-7" />
        <path d="M16 1v6M13 4h6" strokeWidth="1.600" />
      </g>
    ),
  };
  if (name === "settings") return <Gear color={color} />;
  return (
    <svg width="20" height="20" viewBox="0 0 20 20">
      {art[name]}
    </svg>
  );
};

const StoryMark = () => (
  <svg width="8" height="10" viewBox="0 0 8 10">
    <path d="M0 0h8v10L4 7l-4 3z" fill="#fff" />
  </svg>
);

const PersonFace = ({ size }) => (
  <svg width={size} height={size} viewBox="0 0 24 24">
    <circle cx="12" cy="12" r="12" fill="#8993a4" />
    <circle cx="12" cy="9" r="5" fill="#fff" />
    <path d="M4 20c0-4 4-6 8-6s8 2 8 6c-2 2-5 3-8 3s-6-1-8-3z" fill="#fff" />
    <path d="M3 13h18" stroke="#8993a4" strokeWidth="1.500" />
  </svg>
);

const AddPerson = () => (
  <svg width="20" height="22" viewBox="0 0 20 22" fill="#6b778c">
    <circle cx="9" cy="6" r="5" />
    <path d="M1 20c0-6 3-8 8-8s7 2 7 8c0 1-1 2-2 2H3c-1 0-2-1-2-2z" />
    <path d="M16 2v6M13 5h6" stroke="#6b778c" strokeWidth="1.500" />
  </svg>
);

const Bulb = () => (
  <svg width="16" height="22" viewBox="0 0 16 22" fill="#fff">
    <path d="M8 0c4.500 0 8 3 8 7 0 3-2 5-3.500 7h-9C2 12 0 10 0 7c0-4 3.500-7 8-7z" />
    <rect x="4" y="15.500" width="8" height="2" />
    <rect x="5.500" y="19" width="5" height="2.500" rx="1" />
  </svg>
);

/* ---------- data ---------- */

const railTop = [
  ["Activity", <Bell key="a" strokeWidth={1} />],
  ["Chat", <ChatIcon key="c" />],
  ["Teams", <TeamsIcon key="t" />],
  ["Assignments", <Backpack key="b" strokeWidth={1} />],
  ["Calls", <Phone key="p" strokeWidth={1} />],
  ["Files", <File key="f" strokeWidth={1} />],
  ["Calendar", <CalendarIcon key="d" />],
];

const channels = ["General", "Presentation Group A", "Presentation Group C", "Tasks And Support"];
const channelsAfter = ["The Auditorium", "The Breakroom"];

const files = [
  ["BookingsWireFrame.png", "A few seconds ago"],
  ["FilmClassificationWireFrame.png", "13 minutes ago"],
  ["HomePageWireFrame.png", "22 minutes ago"],
  ["ListingGalleryWireFrame.png", "13 minutes ago"],
  ["NewReleasesWireFrame.png", "13 minutes ago"],
  ["OpeningTimesWireFrame.png", "13 minutes ago"],
  ["ScreensWireFrame.png", "4 minutes ago"],
];

const taskApps = [
  ["kraken", true],
  ["folder", true],
  ["teams", true],
  ["chrome", true, true],
  ["eclipse"],
  ["mysqlsh"],
  ["workbench"],
  ["vscode", true],
  ["postman"],
  ["edge", true],
  ["notepad", true],
  ["photos", true],
];

const menu = [
  ["Your work", 97],
  ["Projects", 82, true],
  ["Filters", 70],
  ["Dashboards", 107],
  ["People", 75],
  ["Apps", 71],
];

const sideItems = [
  ["roadmap", "Roadmap"],
  ["backlog", "Backlog", true],
  ["board", "Board"],
  ["code", "Code"],
  ["pages", "Project pages"],
  ["add", "Add item"],
  ["settings", "Project settings", false, 3],
];

const issues = [
  ["QAC-1", "As a client, I want the site to have a home page, so that users can navigate to other areas of the site"],
  ["QAC-2", "As a client, I want the website to be attractive, so that users enjoy the aesthetics of the website"],
  ["QAC-3", "As a user, I want to navigate to various areas of the site in a uniform and predictable manner, so that I can find information that I am in..."],
  ["QAC-4", "As a user, I want to be able to search for I movie that I know the details of, so that I can find the exact content that I am interested in"],
  ["QAC-6", "As a site owner I want an email form for visitors to use so that I do not expose my email address on the internet."],
  ["QAC-7", "As a movie fan with specific knowledge of what I am looking for, I want a site feature that lets me search by keyword so that I can find ..."],
  ["QAC-9", "As a user, I want there to be a contact page, so that I can easily contact the site owner if I have a query"],
  ["QAC-10", "As a user, I want here to be a listing gallery, so that I can see posters of the movies that are currently showing"],
  ["QAC-11", "As a user, I want there to be an opening times page, so that I can details about the opening times of the cinema"],
];

/* ---------- sections ---------- */

const TeamsRail = () => (
  <Rail>
    {railTop.map(([label, icon]) => (
      <RailItem key={label} $active={label === "Teams"}>
        {icon}
        {label}
      </RailItem>
    ))}
    <RailMore>
      <Ellipsis size={20} strokeWidth={1.6} />
    </RailMore>
    <RailItem $push>
      <AppsIcon />
      Apps
    </RailItem>
    <RailItem>
      <CircleHelp strokeWidth={1} />
      Help
    </RailItem>
  </Rail>
);

const Channels = () => (
  <ChannelPanel>
    <BackRow>
      <ChevronLeft size={16} strokeWidth={1.2} />
      All teams
    </BackRow>
    <LogoSlot>
      <TeamLogoBox $size={90}>
        <CodeMark size={72} />
      </TeamLogoBox>
    </LogoSlot>
    <TeamName>
      21MarSoftware2
      <Ellipsis size={20} strokeWidth={1.6} />
    </TeamName>
    <ChannelList>
      {channels.map((c) => (
        <Channel key={c}>{c}</Channel>
      ))}
      <Channel $active>
        Team Dipsy
        <Lock size={15} strokeWidth={1.1} color="#8f8f8f" />
        <ChannelSpacer />
        <PurpleVideo />
      </Channel>
      {channelsAfter.map((c) => (
        <Channel key={c}>{c}</Channel>
      ))}
      <Channel $link>1 hidden channel</Channel>
    </ChannelList>
  </ChannelPanel>
);

const FilesView = () => (
  <Content>
    <ChannelHeader>
      <HeaderLogo>
        <TeamLogoBox $size={40}>
          <CodeMark size={32} />
        </TeamLogoBox>
      </HeaderLogo>
      <HeaderTitle>Team Dipsy</HeaderTitle>
      <Tab $w={40} $gap={20}>Posts</Tab>
      <Tab $w={35} $active>Files</Tab>
      <HeaderRight>
        <HeaderIcon>
          <MoveDiagonal size={26} strokeWidth={1} />
        </HeaderIcon>
        <HeaderIcon>
          <RotateCw size={24} strokeWidth={1} />
        </HeaderIcon>
        <MeetButton>
          <MeetIcon />
          Meet
        </MeetButton>
      </HeaderRight>
    </ChannelHeader>
    <Toolbar>
      <Tool $w={132}>
        <ToolIcon><Plus size={22} strokeWidth={1} /></ToolIcon>
        New
        <ToolChevron><ChevronDown size={17} strokeWidth={1} /></ToolChevron>
      </Tool>
      <Tool $w={154}>
        <ToolIcon><ArrowUpToLine size={20} strokeWidth={1} /></ToolIcon>
        Upload
        <ToolChevron><ChevronDown size={17} strokeWidth={1} /></ToolChevron>
      </Tool>
      <Tool $w={105}>
        <ToolIcon><SyncIcon /></ToolIcon>
        Sync
      </Tool>
      <Tool $w={142}>
        <ToolIcon><LinkIcon /></ToolIcon>
        Copy link
      </Tool>
      <Tool $w={148}>
        <ToolIcon><ArrowDownToLine size={20} strokeWidth={1} /></ToolIcon>
        Download
      </Tool>
      <Tool>
        <ToolIcon><SharePointIcon /></ToolIcon>
        Open in SharePoint
      </Tool>
      <Tool $right>
        <ToolIcon><ListLines /></ToolIcon>
        All Documents
        <ToolChevron><ChevronDown size={17} strokeWidth={1} /></ToolChevron>
      </Tool>
    </Toolbar>
    <FilesArea>
      <FilesMain>
        <Crumbs>
          Team Dipsy
          <ChevronRight size={16} strokeWidth={1} />
          <CrumbCurrent>Wire Frames</CrumbCurrent>
        </Crumbs>
        <TableHead>
          <FileHeadIcon><File size={22} strokeWidth={1} /></FileHeadIcon>
          <HeadCell>Name <ChevronDown size={14} strokeWidth={1} /></HeadCell>
          <HeadCell>Modified <ChevronDown size={14} strokeWidth={1} /></HeadCell>
          <HeadCell>Modified By <ChevronDown size={14} strokeWidth={1} /></HeadCell>
        </TableHead>
        {files.map(([name, when]) => (
          <FileRow key={name}>
            <ThumbCell>
              <Thumb><Thumbnail /></Thumb>
            </ThumbCell>
            <FileName>
              <SyncMarks width="12" height="12" viewBox="0 0 12 12" stroke="#d8d8d8" strokeWidth="1.200">
                <path d="M10.500 0v6M4 2l3 4M0 10h5" />
              </SyncMarks>
              {name}
            </FileName>
            <div>{when}</div>
            <div>Sephton, Philip</div>
          </FileRow>
        ))}
      </FilesMain>
      <ScrollTrack>
        <Triangle />
        <Triangle $down />
      </ScrollTrack>
    </FilesArea>
  </Content>
);

const Teams = () => (
  <TeamsWindow>
    <TitleBar>
      <HistoryNav>
        <ChevronLeft size={22} strokeWidth={1} />
        <ChevronRight size={22} strokeWidth={1} />
      </HistoryNav>
      <TitleSearch>
        <Search size={20} strokeWidth={1} />
        Search
      </TitleSearch>
      <TitleDots><Ellipsis size={20} strokeWidth={1.6} /></TitleDots>
      <Avatar>
        ZJ
        <PresenceDot />
      </Avatar>
      <WinBtn><Minus size={20} strokeWidth={1} /></WinBtn>
      <WinBtn><Copy size={19} strokeWidth={1} /></WinBtn>
      <WinBtn><X size={22} strokeWidth={1} /></WinBtn>
    </TitleBar>
    <TeamsBody>
      <TeamsRail />
      <Channels />
      <FilesView />
    </TeamsBody>
  </TeamsWindow>
);

const LeftTaskbar = () => (
  <Taskbar $h={50} $stop={68}>
    <BarCell $w={61}><WinLogo size={22} /></BarCell>
    <TaskSearch>
      <TaskMagnifier size={22} />
      Type here to search
    </TaskSearch>
    <BarCell $w={60}><CortanaRing $size={20} /></BarCell>
    <BarCell $w={60}><TaskViewIcon size={22} /></BarCell>
    <BarCell $w={3} />
    {taskApps.map(([name, open, active]) => (
      <BarCell key={name} $w={62} $open={open} $active={active}>
        <AppIcon name={name} size={30} />
      </BarCell>
    ))}
    <Tray>
      <TraySlot $w={38}><TrayHelp /></TraySlot>
      <TraySlot $w={34}><ChevronUp size={22} strokeWidth={1.4} /></TraySlot>
      <TraySlot $w={27}><TrayPower /></TraySlot>
      <TraySlot $w={29}><Volume1 size={22} strokeWidth={1.1} /></TraySlot>
      <Clock $w={96} $size={14} $gap={8}>
        <span>10:05</span>
        <span>01/06/2021</span>
      </Clock>
      <NotifyBox>
        <NotifyIcon />
        <NotifyBadge>1</NotifyBadge>
      </NotifyBox>
      <ShowDesktop />
    </Tray>
  </Taskbar>
);

const RightTaskbar = () => (
  <Taskbar $h={40} $stop={70}>
    <BarCell $w={48}><WinLogo size={17} /></BarCell>
    <BarCell $w={48}><TaskMagnifier size={18} /></BarCell>
    <BarCell $w={48}><CortanaRing $size={16} /></BarCell>
    <BarCell $w={47}><TaskViewIcon size={18} /></BarCell>
    <BarCell $w={4} />
    {taskApps.map(([name, open, active]) => (
      <BarCell key={name} $w={49} $open={open} $active={active}>
        <AppIcon name={name} size={25} />
      </BarCell>
    ))}
    <Clock $push $w={64} $size={12} $gap={4} $end={3}>
      <span>10:05</span>
      <span>01/06/2021</span>
    </Clock>
  </Taskbar>
);

const ChromeFrame = () => (
  <>
    <TabStrip>
      <ChromeTab $w={247} $pad={20}>
        <Favicon><OutlookIcon /></Favicon>
        <TabTitle>Mail - Jamil, Zayne - Outlook</TabTitle>
        <TabClose><X size={13} strokeWidth={2.2} /></TabClose>
      </ChromeTab>
      <ChromeTab $w={240} $pad={12} $active>
        <Favicon><JiraDiamond size={16} /></Favicon>
        <TabTitle>QA Cinema Project - Agile board</TabTitle>
        <TabClose><X size={13} strokeWidth={2.2} /></TabClose>
      </ChromeTab>
      <ChromeTab $w={238} $pad={11}>
        <Favicon><QaMark /></Favicon>
        <TabTitle>QA Community</TabTitle>
      </ChromeTab>
      <TabDivider />
      <NewTab><Plus size={17} strokeWidth={2.4} /></NewTab>
      <ChromeControls>
        <MenuDisc><ChevronDown size={10} strokeWidth={4} color="#111" /></MenuDisc>
        <ChromeCtl><Minus size={14} strokeWidth={1} /></ChromeCtl>
        <ChromeCtl><Copy size={12} strokeWidth={1} /></ChromeCtl>
        <ChromeCtl><X size={15} strokeWidth={1} /></ChromeCtl>
      </ChromeControls>
    </TabStrip>
    <ToolRow>
      <NavBtn><ArrowLeft size={18} strokeWidth={2} /></NavBtn>
      <NavBtn $dim><ArrowRight size={18} strokeWidth={2} /></NavBtn>
      <NavBtn><RotateCw size={15} strokeWidth={2} /></NavBtn>
      <Omnibox>
        <Lock size={12} strokeWidth={2.4} color="#e8eaed" fill="#e8eaed" />
        <UrlHost>team-1616578727154.atlassian.net</UrlHost>
        <UrlPath>/jira/software/projects/QAC/boards/6/backlog?atlOrigin=eyJpIjoiOWZmNTQ4Nzg4ODJlNDhkOGI1ZDFiYjk0ODQ...</UrlPath>
        <Star size={15} strokeWidth={1.6} color="#e8eaed" />
      </Omnibox>
      <ExtRow>
        <ExtSlot><Shield /></ExtSlot>
        <ExtSlot><SeMark>Se</SeMark></ExtSlot>
        <ExtSlot><ReactMark /></ExtSlot>
        <ExtSlot><Puzzle /></ExtSlot>
      </ExtRow>
      <ProfilePill>
        <ProfileDisc>Z</ProfileDisc>
        Paused
      </ProfilePill>
      <NavBtn><EllipsisVertical size={16} strokeWidth={2.4} /></NavBtn>
    </ToolRow>
    <Bookmarks>
      <Bookmark $w={74} $gap={9}><AppsGrid />Apps</Bookmark>
      <Bookmark $w={145} $gap={8}><Globe />Recent device strea...</Bookmark>
      <Bookmark $w={104} $gap={10}><FolderMark />Work things</Bookmark>
      <Bookmark $w={110} $gap={10}><FolderMark />Coding pages</Bookmark>
      <ReadingList><ReadingIcon />Reading list</ReadingList>
    </Bookmarks>
  </>
);

const JiraTopNav = () => (
  <JiraNav>
    <JiraGrid />
    <JiraBrand>
      <JiraDiamond size={18} color="#2684ff" />
      Jira Software
    </JiraBrand>
    {menu.map(([label, w, active]) => (
      <MenuItem key={label} $w={w} $active={active}>
        {label}
        <ChevronDown size={12} strokeWidth={3} />
      </MenuItem>
    ))}
    <CreateButton>Create</CreateButton>
    <JiraSearch>
      <Search size={14} strokeWidth={2} />
      Search
    </JiraSearch>
    <JiraActions>
      <JiraAction><JiraBell /></JiraAction>
      <JiraAction><JiraHelp /></JiraAction>
      <JiraAction><Gear /></JiraAction>
      <RoundAvatar $size={24}>ZJ</RoundAvatar>
    </JiraActions>
  </JiraNav>
);

const ProjectSidebar = () => (
  <Sidebar>
    <ProjectHead>
      <ProjectLogo />
      <div>
        <ProjectName>QA Cinema Project</ProjectName>
        <ProjectKind>Software project</ProjectKind>
      </div>
    </ProjectHead>
    <SideNav>
      {sideItems.map(([icon, label, active, gap]) => (
        <SideItem key={label} $active={active} $gap={gap}>
          <SideGlyph name={icon} color={active ? "#0052cc" : "#344563"} />
          {label}
        </SideItem>
      ))}
    </SideNav>
    <SideFoot>
      <span>You're in a team-managed project</span>
      <LearnMore>Learn more</LearnMore>
    </SideFoot>
  </Sidebar>
);

const Backlog = () => (
  <BacklogMain>
    <JiraCrumbs>
      <span>Projects</span>
      <span>/</span>
      <span>QA Cinema Project</span>
    </JiraCrumbs>
    <PageTitle>Backlog</PageTitle>
    <FilterRow>
      <FilterBox><Search size={15} strokeWidth={1.6} /></FilterBox>
      <RoundAvatar $size={32} $font={13}>ZJ</RoundAvatar>
      <RoundAvatar $size={32} $bg="#dfe1e6" $gap={10}><AddPerson /></RoundAvatar>
      <EpicPicker>
        Epic
        <ChevronDown size={13} strokeWidth={3} />
      </EpicPicker>
    </FilterRow>
    <BacklogHead>
      <ChevronDown size={13} strokeWidth={3} color="#344563" />
      <BacklogTitle>Backlog</BacklogTitle>
      <IssueCount>(17 issues)</IssueCount>
      <Badges>
        <Badge $bg="#dfe1e6" $fg="#172b4d">0</Badge>
        <Badge $bg="#0052cc" $fg="#fff">0</Badge>
        <Badge $bg="#00875a" $fg="#fff">0</Badge>
      </Badges>
      <SprintButton>Create sprint</SprintButton>
    </BacklogHead>
    <IssueList>
      {issues.map(([key, text]) => (
        <IssueRow key={key}>
          <IssueType><StoryMark /></IssueType>
          <IssueKey>{key}</IssueKey>
          <IssueSummary>{text}</IssueSummary>
          <PersonFace size={24} />
        </IssueRow>
      ))}
    </IssueList>
  </BacklogMain>
);

const Jira = () => (
  <>
    <JiraTopNav />
    <JiraBody>
      <ProjectSidebar />
      <Backlog />
      <PageScroll>
        <PageArrow />
        <ScrollThumb />
        <PageArrow $down />
      </PageScroll>
      <Quickstart>
        <Bulb />
        Quickstart
      </Quickstart>
    </JiraBody>
  </>
);

export default function App() {
  return (
    <Page>
      <Global />
      <LeftScreen>
        <Teams />
        <LeftTaskbar />
      </LeftScreen>
      <RightScreen>
        <Browser>
          <ChromeFrame />
          <Jira />
        </Browser>
        <RightTaskbar />
      </RightScreen>
    </Page>
  );
}
